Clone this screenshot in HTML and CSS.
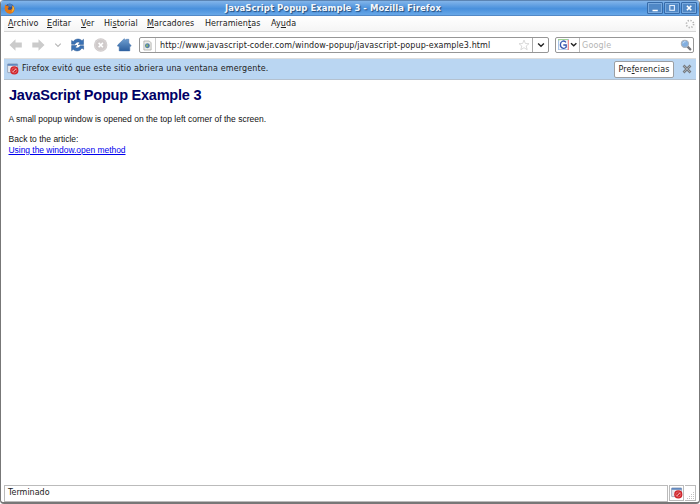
FILE: index.html
```
<!DOCTYPE html>
<html lang="es">
<head>
<meta charset="utf-8">
<title>JavaScript Popup Example 3</title>
<link rel="stylesheet" href="styles.css">
</head>
<body>
<svg width="0" height="0" class="defs">
  <defs>
    <linearGradient id="blue" x1="0" y1="0" x2="0" y2="1"><stop offset="0" stop-color="#6f9fd0"/><stop offset="1" stop-color="#2c5f9e"/></linearGradient>
    <symbol id="blocked" viewBox="0 0 12 12">
      <rect x=".6" y="1" width="10" height="8.6" rx=".5" fill="#e8e9ee" stroke="#8795ad" stroke-width=".7"/>
      <rect x=".6" y=".9" width="10" height="1.9" fill="#6288bd"/>
      <circle cx="7.3" cy="7.4" r="4.1" fill="#cf2229"/>
      <circle cx="7.3" cy="7.4" r="2.5" fill="none" stroke="#e98487" stroke-width=".6"/>
      <path d="M5.8 8.9 8.8 5.9" stroke="#f8dede" stroke-width="1"/>
    </symbol>
  </defs>
</svg>
<div class="window">
  <header class="titlebar">
    <svg class="fox" viewBox="0 0 12 12" width="11" height="11">
      <circle cx="6.1" cy="5.8" r="5" fill="#304f91"/>
      <path d="M3.6 1.8C5 .5 8 .6 9.3 2.2L7.7 4.6 5.2 3.8Z" fill="#477cbc"/>
      <path d="M1.2 1.7 2.5 3 4.3 3 5.5 4.5 4.1 5.4 4.7 7.3 7.2 7.6 9.1 5.9 9 2.5C12 4 12.5 8.4 9.4 10.7 5.9 13 1 10.8.8 6.3.7 4.4 1 3 1.2 1.7Z" fill="#e37816"/>
      <path d="M9.3 3C11.8 5 11 9 8 10.1 9.7 8.1 9.5 5.3 9.3 3Z" fill="#f7c83d"/>
    </svg>
    <h1 class="title">JavaScript Popup Example 3 - Mozilla Firefox</h1>
    <div class="controls">
      <span class="control"><svg viewBox="0 0 14 10"><path d="M4.5 7.5H9.8" stroke="#fff" stroke-width="1.5"/></svg></span>
      <span class="control"><svg viewBox="0 0 14 10"><rect x="4.8" y="2.5" width="4.6" height="4.8" fill="none" stroke="#e7f1ff" stroke-width="1.1"/></svg></span>
      <span class="control"><svg viewBox="0 0 14 10"><path d="M4.9 2.8 9.3 7.2M9.3 2.8 4.9 7.2" stroke="#fff" stroke-width="1.6"/></svg></span>
    </div>
  </header>
  <nav class="menu">
    <span class="m1"><u>A</u>rchivo</span><span class="m2"><u>E</u>ditar</span><span class="m3"><u>V</u>er</span><span class="m4">Hi<u>s</u>torial</span><span class="m5"><u>M</u>arcadores</span><span class="m6">Herramien<u>t</u>as</span><span class="m7">Ay<u>u</u>da</span>
    <svg class="throbber" viewBox="0 0 10 10" width="10" height="10"><circle cx="5" cy="5" r="3.6" fill="none" stroke="#b4b4b4" stroke-width="1.6" stroke-dasharray="1.3 1.527"/></svg>
  </nav>
  <div class="toolbar">
    <svg class="tools" viewBox="0 0 130 20" width="130" height="20">
      <path d="M5.5 10 11.5 4.2V7.4H17.8V12.6H11.5V15.8Z" fill="#cbcbcb"/>
      <path d="M40.5 10 34.5 4.2V7.4H28.3V12.6H34.5V15.8Z" fill="#cbcbcb"/>
      <path d="M51.2 8.7 54 11.5 56.8 8.7" fill="none" stroke="#b8b8b8" stroke-width="1.2"/>
      <path d="M67.6 9.3V5.4L69.2 6.6C71.2 3.6 75.4 3.2 78 5.7L79.5 4.3V9.5H74.1L76 7.7C74.3 6.3 72 7 71 9.3Z" fill="#3971b4" stroke="#285790" stroke-width=".5"/>
      <path d="M79.6 10.7V14.3L78 13C76 16.4 71.7 16.8 69.2 14.3L67.6 15.8V10.5H73L71.2 12.3C73 13.6 75.2 12.9 76.2 10.7Z" fill="#3971b4" stroke="#285790" stroke-width=".5"/>
      <circle cx="96.7" cy="10" r="6.7" fill="#cfcaca"/><circle cx="96.7" cy="10" r="5.7" fill="none" stroke="#dcd9d9" stroke-width=".7"/><path d="m94.6 7.9 4.3 4.3m0-4.3-4.3 4.3" stroke="#fff" stroke-width="1.6"/>
      <path d="M113.5 10 120 3.7 122 5.5V4.3H124.6V8L126.8 10.4V11.2H125.6V15.9H115V11.2H113.5Z" transform="translate(.2 0)" fill="url(#blue)" stroke="#3c6da8" stroke-width=".5"/>
    </svg>
    <div class="address">
      <div class="site"><svg viewBox="0 0 10 12" width="9" height="11"><path d="M1 1H7L9 3V11H1Z" fill="#eeeeea" stroke="#a3a3a0" stroke-width=".8"/><circle cx="4.9" cy="6.3" r="2.7" fill="#507eaa"/><path d="M3.2 5.1 5 4.5 5.8 6 4.8 8 3.3 7Z" fill="#8ab36c"/></svg></div>
      <span class="url">http://www.javascript-coder.com/window-popup/javascript-popup-example3.html</span>
      <svg class="star" viewBox="0 0 12 12" width="12" height="12"><path d="M6 1.1 7.4 4.5 11 4.7 8.2 7 9.2 10.7 6 8.7 2.8 10.7 3.8 7 1 4.7 4.6 4.5Z" fill="#fff" stroke="#d0d0d0" stroke-width=".8"/></svg>
      <div class="drop"><svg viewBox="0 0 10 8" width="10" height="8"><path d="M2.1 2.6 5 5.3 7.9 2.6" fill="none" stroke="#222" stroke-width="1.4"/></svg></div>
    </div>
    <div class="search">
      <svg class="google" viewBox="0 0 20 12" width="20" height="12"><path d="M0 0H11V11H0Z" fill="#a9c3e6"/><path d="M0 0H10V1.5H0Z" fill="#9fd293"/><path d="M9.5 1H11V11H9.5Z" fill="#ef8e8e"/><rect x="1.2" y="1.2" width="8.4" height="9" fill="#fff"/><path d="M8 3.3C6 .9 2.4 2.1 2.4 5.8S6.5 10.4 8.2 8.2V6H5.3" fill="none" stroke="#3557af" stroke-width="1.3"/><path d="M13 4.2 15.7 6.8 18.4 4.2" fill="none" stroke="#222" stroke-width="1.4"/></svg>
      <span class="query">Google</span>
      <svg class="lens" viewBox="0 0 12 12" width="12" height="12"><path d="m7.3 7.4 3 3" stroke="#77777c" stroke-width="2.2" stroke-linecap="round"/><circle cx="4.9" cy="4.8" r="3.6" fill="#82afe0" stroke="#a9b1bb" stroke-width="1.1"/><path d="M3 4.4C3.2 3 4.5 2.5 5.5 2.8" stroke="#d8e9fb" stroke-width="1" fill="none"/></svg>
    </div>
  </div>
  <div class="notice">
    <svg class="notice-icon" width="12" height="12"><use href="#blocked"/></svg>
    <span class="message">Firefox evitó que este sitio abriera una ventana emergente.</span>
    <button class="prefs">Pre<u>f</u>erencias</button>
    <svg class="close" viewBox="0 0 10 10" width="10" height="10"><path d="m1.5 1.5 7 7m0-7-7 7" stroke="#777c82" stroke-width="2.6"/><path d="m2 2 6 6m0-6-6 6" stroke="#a3a8ad" stroke-width="1"/></svg>
  </div>
  <main class="page">
    <h2>JavaScript Popup Example 3</h2>
    <p class="intro">A small popup window is opened on the top left corner of the screen.</p>
    <p class="back"><span>Back to the article:</span><br><a href="#">Using the window.open method</a></p>
  </main>
  <footer class="status">
    <span class="state">Terminado</span>
    <span class="popup"><svg width="12" height="12"><use href="#blocked"/></svg></span>
    <span class="grip"><svg viewBox="0 0 10 10" width="10" height="10" fill="#c2c2c2"><path d="M8 1h1v1H8zM6 3h1v1H6zM8 3h1v1H8zM4 5h1v1H4zM6 5h1v1H6zM8 5h1v1H8zM2 7h1v1H2zM4 7h1v1H4zM6 7h1v1H6zM8 7h1v1H8z"/></svg></span>
  </footer>
</div>
</body>
</html>
```
FILE: styles.css
```
* { box-sizing: border-box; }
body { margin: 0; width: 700px; height: 504px; overflow: hidden; background: #fff; font: 8px/10px "DejaVu Sans", sans-serif; color: #222; }
svg { display: block; flex: none; }
.defs { position: absolute; }
u { text-decoration-thickness: 1px; text-underline-offset: 1px; }
.window { width: 700px; height: 504px; display: flex; flex-direction: column; border: 1px solid #777; border-top: 0; border-bottom: 2px solid #777; border-radius: 4px; background: #fff; overflow: hidden; white-space: nowrap; }
.titlebar { height: 16px; flex: none; display: flex; align-items: center; padding: 0 2px 0 3px; border-top: 1px solid #5b84b3; border-bottom: 1px solid #5389c7; background: linear-gradient(#83b5ea, #4990dc 55%, #68a8e8); }
.title { flex: 1; margin: 0; padding-left: 210px; font-size: 8.5px; line-height: 12px; font-weight: bold; letter-spacing: .04px; color: #f5f8fc; text-shadow: 1px 1px 1px #244b78; }
.controls { display: flex; gap: 1px; }
.control { width: 16px; height: 12px; border: 1px solid #376ba8; border-radius: 1px; background: #5088c6; box-shadow: inset 0 0 0 1px #78a9de; }
.menu { height: 16px; flex: none; display: flex; align-items: center; margin: 0 3px; padding: 1px 0 0 4px; border-bottom: 1px solid #d5d5d5; background: linear-gradient(#fff, #f5f5f5); letter-spacing: .08px; }
.m1 { width: 39px; } .m2 { width: 34px; } .m3 { width: 23px; } .m4 { width: 43px; } .m5 { width: 58px; } .m6 { width: 66px; } .m7 { flex: 1; }
.throbber { margin-right: 1px; }
.toolbar { height: 26px; flex: none; display: flex; align-items: center; margin: 0 3px; }
.address { display: flex; align-items: center; width: 410px; height: 16px; margin-left: 5px; border: 1px solid #969696; border-radius: 2px; background: #fff; }
.site { width: 16px; height: 14px; display: flex; align-items: center; justify-content: center; border-right: 1px solid #ccc; }
.url { flex: 1; padding: 1px 0 0 4px; letter-spacing: .09px; }
.star { margin-right: 2px; }
.drop { width: 16px; height: 14px; display: flex; align-items: center; justify-content: center; border-left: 1px solid #aaa; }
.search { display: flex; align-items: center; width: 139px; height: 16px; margin-left: 6px; border: 1px solid #969696; border-radius: 2px; background: #fff; }
.google { margin-left: 2px; }
.query { flex: 1; height: 14px; line-height: 15px; margin-left: 1px; padding-left: 2px; border-left: 1px solid #bbb; color: #b4b4b4; letter-spacing: .18px; }
.lens { margin-right: 1px; }
.notice { height: 22px; flex: none; display: flex; align-items: center; margin: 0 3px; padding-left: 3px; border-top: 1px solid #dedede; border-bottom: 1px solid #b4c1cf; background: #bad6f2; }
.message { flex: 1; margin-left: 3px; letter-spacing: .137px; }
.prefs { width: 60px; height: 17px; margin: 0; padding: 1px 0 0; border: 1px solid #9c9fa3; border-radius: 2px; background: #fff; color: #222; font: inherit; letter-spacing: .15px; }
.close { margin: 0 4px 0 8px; }
.page { flex: 1; margin: 0 3px; padding: 7px 5px; font: 8.5px/11px "Liberation Sans", sans-serif; color: #111; }
h2 { margin: 0 0 11px; font-size: 14.5px; line-height: 16px; letter-spacing: -.23px; color: #000066; }
p { margin: 0 0 0 -.5px; }
.intro { margin-bottom: 9px; }
a { color: #00e; letter-spacing: -.04px; }
.status { height: 17px; flex: none; display: flex; gap: 1px; margin: 0 3px; }
.state { flex: 1; padding: 2px 3px; border: 1px solid #bbb; }
.popup { width: 15px; height: 16px; border: 1px solid #bbb; padding: 1px; }
.grip { width: 11px; height: 16px; padding-top: 5px; border: 1px solid #bbb; border-left: 0; }
```
